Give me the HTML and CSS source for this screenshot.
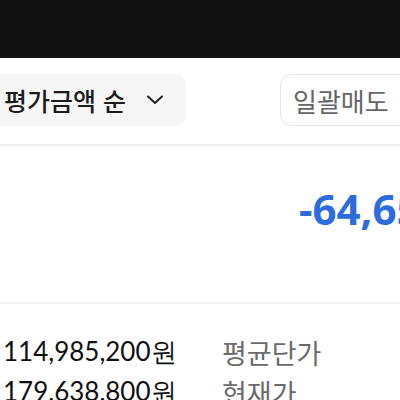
FILE: index.html
```html
<!DOCTYPE html>
<html lang="ko">
<head>
    <meta charset="UTF-8">
    <meta name="viewport" content="width=device-width, initial-scale=1.0">
    <title>보유 주식</title>
    <link rel="stylesheet" href="styles.css">
</head>
<body>
    <div class="status-bar"></div>

    <div class="toolbar">
        <div class="sort-chip">
            <span>평가금액 순</span>
            <svg class="chevron" width="18" height="10" viewBox="0 0 18 10">
                <path d="M2 1.5 L9 8 L16 1.5" fill="none" stroke="#222" stroke-width="2" stroke-linecap="round" stroke-linejoin="round"/>
            </svg>
        </div>
        <button class="sell-all">일괄매도</button>
    </div>

    <div class="summary">
        <div class="profit">-64,650,000원</div>
    </div>

    <div class="details">
        <div class="row">
            <span class="amount">114,985,200원</span>
            <span class="label">평균단가</span>
        </div>
        <div class="row">
            <span class="amount">179,638,800원</span>
            <span class="label">현재가</span>
        </div>
    </div>
</body>
</html>
```

FILE: styles.css
```css
body {
    margin: 0;
    padding: 0;
    width: 400px;
    height: 400px;
    overflow: hidden;
    background-color: #ffffff;
    font-family: 'Noto Sans CJK KR', 'Noto Sans', sans-serif;
    color: #1a1a1a;
}

.status-bar {
    height: 58px;
    background-color: #121212;
}

.toolbar {
    display: flex;
    justify-content: space-between;
    align-items: center;
    height: 86px;
    border-bottom: 2px solid #ededed;
    white-space: nowrap;
}

.sort-chip {
    display: flex;
    align-items: center;
    gap: 20px;
    height: 52px;
    padding: 0 22px 0 4px;
    background-color: #f6f6f7;
    border-radius: 0 10px 10px 0;
    font-size: 25px;
    font-weight: 500;
    color: #1c1c1c;
    margin-top: -2px;
}

.sell-all {
    height: 52px;
    width: 140px;
    margin-right: -20px;
    margin-top: -2px;
    padding: 0 0 0 12px;
    text-align: left;
    background-color: #ffffff;
    border: 1.5px solid #e6e6e6;
    border-radius: 11px;
    font-family: 'Noto Sans CJK KR', sans-serif;
    font-size: 26px;
    color: #666666;
}

.summary {
    height: 156px;
    border-bottom: 2px solid #f2f2f2;
    white-space: nowrap;
}

.profit {
    padding: 38px 0 0 299px;
    font-family: 'Noto Sans', sans-serif;
    font-size: 42px;
    font-weight: 700;
    line-height: 50px;
    color: #2d6cdc;
}

.details {
    padding-top: 28px;
}

.row {
    display: flex;
    height: 40px;
    align-items: center;
    white-space: nowrap;
}

.amount {
    width: 222px;
    padding-left: 3px;
    box-sizing: border-box;
    font-family: 'Lato', sans-serif;
    font-size: 26px;
    color: #111111;
}

.label {
    font-size: 27px;
    color: #6b6b6b;
}
```
